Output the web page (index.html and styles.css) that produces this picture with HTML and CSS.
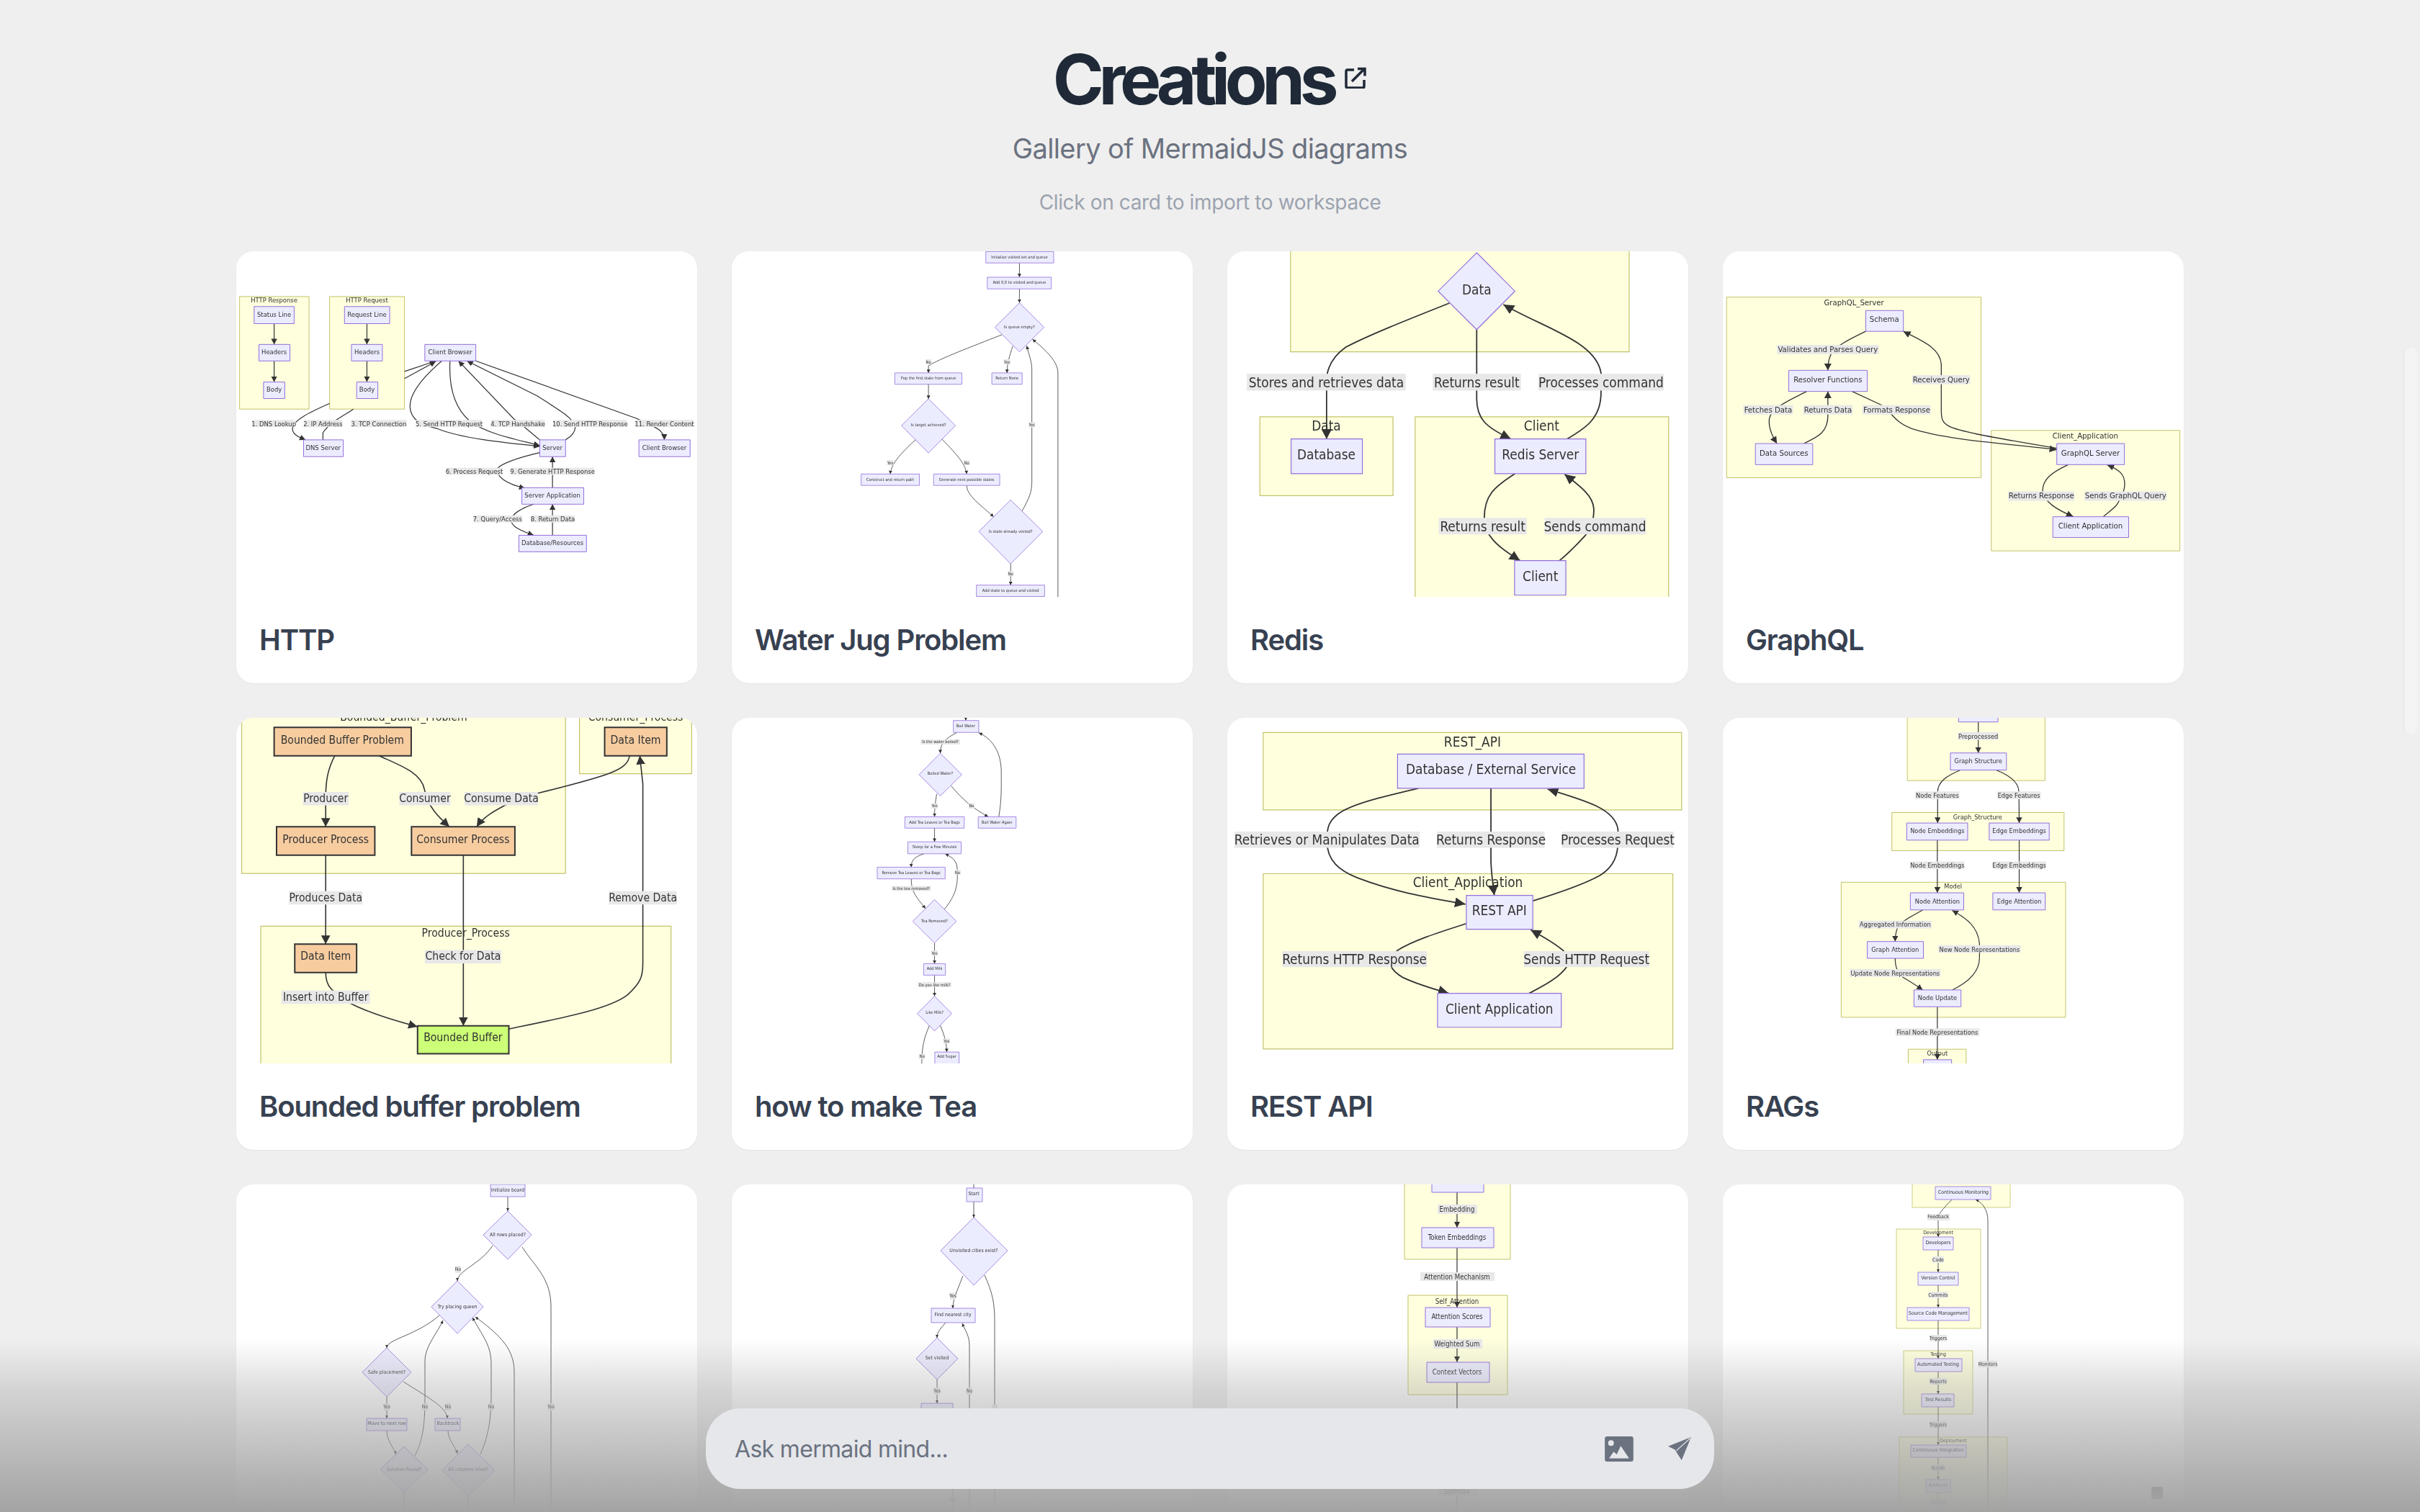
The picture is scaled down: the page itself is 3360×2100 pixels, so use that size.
FILE: index.html
```html
<!DOCTYPE html>
<html lang="en">
<head>
  <meta charset="UTF-8">
  <meta name="viewport" content="width=device-width, initial-scale=1.0">
  <title>Creations</title>
  <link rel="stylesheet" href="styles.css">
</head>
<body>
<svg class="defs" aria-hidden="true">
  <defs>
    <marker id="a35" viewBox="0 0 10 10" refX="10" refY="5" markerUnits="userSpaceOnUse" markerWidth="35" markerHeight="35" orient="auto"><path d="M0 0L10 5L0 10z" fill="#333"/></marker>
    <marker id="a30" viewBox="0 0 10 10" refX="10" refY="5" markerUnits="userSpaceOnUse" markerWidth="30" markerHeight="30" orient="auto"><path d="M0 0L10 5L0 10z" fill="#333"/></marker>
    <marker id="a24" viewBox="0 0 10 10" refX="10" refY="5" markerUnits="userSpaceOnUse" markerWidth="24" markerHeight="24" orient="auto"><path d="M0 0L10 5L0 10z" fill="#333"/></marker>
    <marker id="a20" viewBox="0 0 10 10" refX="10" refY="5" markerUnits="userSpaceOnUse" markerWidth="20" markerHeight="20" orient="auto"><path d="M0 0L10 5L0 10z" fill="#333"/></marker>
    <marker id="a12" viewBox="0 0 10 10" refX="10" refY="5" markerUnits="userSpaceOnUse" markerWidth="12" markerHeight="12" orient="auto"><path d="M0 0L10 5L0 10z" fill="#333"/></marker>
    <marker id="p4" viewBox="0 0 10 10" refX="10" refY="5" markerUnits="userSpaceOnUse" markerWidth="4.5" markerHeight="4.5" orient="auto"><path d="M0 0L10 5L0 10z" fill="#333"/></marker>
    <marker id="p8" viewBox="0 0 10 10" refX="10" refY="5" markerUnits="userSpaceOnUse" markerWidth="8" markerHeight="8" orient="auto"><path d="M0 0L10 5L0 10z" fill="#333"/></marker>
  </defs>
</svg>

<header class="page-head">
  <h1 class="page-title">Creations
    <svg class="ext-icon" viewBox="0 0 30 30"><path d="M13 4H4a2 2 0 0 0-2 2v21a2 2 0 0 0 2 2h21a2 2 0 0 0 2-2v-9M10 20L27 3M18 2.5h10v10"/></svg>
  </h1>
  <p class="page-sub">Gallery of MermaidJS diagrams</p>
  <p class="page-hint">Click on card to import to workspace</p>
</header>

<main class="gallery">

  <!-- row 1 -->
  <article class="card">
    <svg class="diagram d-http" viewBox="0 0 640 480">
      <g transform="translate(-8 -9.1) scale(.421 .3956)">
        <rect class="cl" x="30" y="182" width="229" height="395"/>
        <rect class="cl" x="327" y="182" width="247" height="395"/>
        <path class="ed" d="M327 557C270 585 215 610 205 640C200 665 225 675 248 685" marker-end="url(#a20)"/>
        <path class="ed" d="M405 577C375 600 330 620 305 660L305 685"/>
        <path class="ed" d="M574 445L677 408" marker-end="url(#a20)"/>
        <path class="ed" d="M574 470L677 410" marker-end="url(#a20)"/>
        <path class="ed" d="M697 408C640 460 590 520 592 570C595 610 620 630 680 645C760 680 900 695 1020 708" marker-end="url(#a20)"/>
        <path class="ed" d="M724 408C720 490 735 570 790 620C850 665 930 680 1020 705" marker-end="url(#a20)"/>
        <path class="ed" d="M1020 685C980 650 960 630 935 612L752 408" marker-end="url(#a20)"/>
        <path class="ed" d="M1105 685C1130 670 1137 655 1137 640C1130 610 1100 590 1010 530L780 408" marker-end="url(#a20)"/>
        <path class="ed" d="M809 408L1340 610C1400 640 1430 650 1431 685" marker-end="url(#a20)"/>
        <path class="ed" d="M1020 730C960 745 900 765 880 785C875 815 910 840 972 855" marker-end="url(#a20)"/>
        <path class="ed" d="M1062 853L1062 744" marker-end="url(#a20)"/>
        <path class="ed" d="M1000 911C960 925 930 945 925 965C925 990 960 1005 1000 1020" marker-end="url(#a20)"/>
        <path class="ed" d="M1062 1020L1062 911" marker-end="url(#a20)"/>
        <path class="ed" d="M144 277V350" marker-end="url(#a20)"/>
        <path class="ed" d="M144 408V482" marker-end="url(#a20)"/>
        <path class="ed" d="M450 277V350" marker-end="url(#a20)"/>
        <path class="ed" d="M450 408V482" marker-end="url(#a20)"/>
        <rect class="nd" x="78" y="217" width="132" height="60"/>
        <rect class="nd" x="94" y="350" width="102" height="58"/>
        <rect class="nd" x="109" y="482" width="70" height="58"/>
        <rect class="nd" x="376" y="217" width="149" height="60"/>
        <rect class="nd" x="399" y="350" width="102" height="58"/>
        <rect class="nd" x="416" y="482" width="70" height="58"/>
        <rect class="nd" x="641" y="350" width="168" height="58"/>
        <rect class="nd" x="241" y="685" width="131" height="59"/>
        <rect class="nd" x="1020" y="685" width="85" height="59"/>
        <rect class="nd" x="1347" y="685" width="169" height="59"/>
        <rect class="nd" x="961" y="853" width="204" height="58"/>
        <rect class="nd" x="951" y="1020" width="223" height="58"/>
        <rect class="lb" x="72" y="615" width="143" height="25"/>
        <rect class="lb" x="242" y="615" width="127" height="25"/>
        <rect class="lb" x="398" y="615" width="183" height="25"/>
        <rect class="lb" x="612" y="615" width="218" height="25"/>
        <rect class="lb" x="859" y="615" width="178" height="25"/>
        <rect class="lb" x="1065" y="615" width="242" height="25"/>
        <rect class="lb" x="1335" y="615" width="193" height="25"/>
        <rect class="lb" x="712" y="783" width="185" height="25"/>
        <rect class="lb" x="925" y="783" width="275" height="25"/>
        <rect class="lb" x="800" y="950" width="162" height="25"/>
        <rect class="lb" x="990" y="950" width="146" height="25"/>
      </g>
      <text x="52.6" y="67.6">HTTP Response</text>
      <text x="181.5" y="67.6">HTTP Request</text>
      <text x="52.6" y="87">Status Line</text>
      <text x="181.5" y="87">Request Line</text>
      <text x="52.6" y="139.3">Headers</text>
      <text x="181.5" y="139.3">Headers</text>
      <text x="52.6" y="191.9">Body</text>
      <text x="181.5" y="191.9">Body</text>
      <text x="297.2" y="139.3">Client Browser</text>
      <text x="52.2" y="239">1. DNS Lookup</text>
      <text x="120.4" y="239">2. IP Address</text>
      <text x="197.9" y="239">3. TCP Connection</text>
      <text x="295.5" y="239">5. Send HTTP Request</text>
      <text x="391.1" y="239">4. TCP Handshake</text>
      <text x="491.3" y="239">10. Send HTTP Response</text>
      <text x="594.5" y="239">11. Render Content</text>
      <text x="120.8" y="272.2">DNS Server</text>
      <text x="439.1" y="272.2">Server</text>
      <text x="594.5" y="272.2">Client Browser</text>
      <text x="330.5" y="305.4">6. Process Request</text>
      <text x="439.1" y="305.4">9. Generate HTTP Response</text>
      <text x="439.1" y="338.6">Server Application</text>
      <text x="362.9" y="371.5">7. Query/Access</text>
      <text x="439.5" y="371.5">8. Return Data</text>
      <text x="439.1" y="404.7">Database/Resources</text>
    </svg>
    <h3 class="card-title">HTTP</h3>
  </article>

  <article class="card">
    <svg class="diagram d-water" viewBox="0 0 640 480">
      <g transform="translate(-6 -9.1) scale(.421 .3956)">
        <path class="ed" d="M963 64V114" marker-end="url(#a12)"/>
        <path class="ed" d="M963 155V204" marker-end="url(#a12)"/>
        <path class="ed" d="M905 316C800 360 700 400 663 425L663 450" marker-end="url(#a12)"/>
        <path class="ed" d="M941 356C930 390 922 420 922 450" marker-end="url(#a12)"/>
        <path class="ed" d="M663 490V541" marker-end="url(#a12)"/>
        <path class="ed" d="M620 685C580 725 540 765 537 805" marker-end="url(#a12)"/>
        <path class="ed" d="M708 683C745 725 785 765 789 805" marker-end="url(#a12)"/>
        <path class="ed" d="M789 845C790 880 830 910 878 955" marker-end="url(#a12)"/>
        <path class="ed" d="M971 936C995 890 1004 870 1004 830L1004 440C1004 410 995 390 987 355" marker-end="url(#a12)"/>
        <path class="ed" d="M1090 1240L1090 450C1090 410 1050 370 1006 332" marker-end="url(#a12)"/>
        <path class="ed" d="M934 1120V1195" marker-end="url(#a12)"/>
        <rect class="nd" x="852" y="24" width="224" height="40"/>
        <rect class="nd" x="857" y="114" width="211" height="41"/>
        <polygon class="nd" points="963,204 1044,290 963,376 882,290"/>
        <rect class="nd" x="552" y="450" width="221" height="40"/>
        <rect class="nd" x="872" y="450" width="100" height="40"/>
        <polygon class="nd" points="663,541 752,635 663,731 574,635"/>
        <rect class="nd" x="441" y="805" width="192" height="40"/>
        <rect class="nd" x="680" y="805" width="218" height="40"/>
        <polygon class="nd" points="934,896 1040,1007 934,1120 829,1007"/>
        <rect class="nd" x="821" y="1195" width="225" height="40"/>
        <rect class="lb" x="653" y="402" width="20" height="18"/>
        <rect class="lb" x="911" y="402" width="22" height="18"/>
        <rect class="lb" x="526" y="756" width="22" height="18"/>
        <rect class="lb" x="779" y="756" width="20" height="18"/>
        <rect class="lb" x="993" y="623" width="22" height="18"/>
        <rect class="lb" x="924" y="1146" width="20" height="18"/>
      </g>
      <text x="399.4" y="7.9">Initialize visited set and queue</text>
      <text x="399.4" y="43.1">Add 0,0 to visited and queue</text>
      <text x="399.4" y="105.2">Is queue empty?</text>
      <text x="273.1" y="153.5">No</text>
      <text x="382.2" y="153.5">Yes</text>
      <text x="273.1" y="175.6">Pop the first state from queue</text>
      <text x="382.2" y="175.6">Return None</text>
      <text x="273.1" y="240.9">Is target achieved?</text>
      <text x="416.7" y="240.9">Yes</text>
      <text x="220.1" y="293.5">Yes</text>
      <text x="326.2" y="293.5">No</text>
      <text x="220.1" y="316.9">Construct and return path</text>
      <text x="326.2" y="316.9">Generate next possible states</text>
      <text x="387.2" y="388.5">Is state already visited?</text>
      <text x="387.2" y="447.8">No</text>
      <text x="387.2" y="470.8">Add state to queue and visited</text>
    </svg>
    <h3 class="card-title">Water Jug Problem</h3>
  </article>

  <article class="card">
    <svg class="diagram d-redis" viewBox="0 0 640 480">
      <g transform="translate(-4 -9.1) scale(.421 .3956)">
        <rect class="cl" x="218" y="-40" width="1117" height="416"/>
        <rect class="cl" x="117" y="604" width="439" height="277"/>
        <rect class="cl" x="629" y="604" width="836" height="720"/>
        <path class="ed" d="M742 205C600 265 470 320 400 360C360 390 340 430 337 470L337 682" marker-end="url(#a35)"/>
        <path class="ed" d="M832 298L832 540C832 610 860 640 945 682" marker-end="url(#a35)"/>
        <path class="ed" d="M1130 682C1190 645 1242 610 1242 520L1242 450C1225 340 1060 295 920 210" marker-end="url(#a35)"/>
        <path class="ed" d="M958 804C890 850 857 880 857 960C857 1020 900 1060 975 1109" marker-end="url(#a35)"/>
        <path class="ed" d="M1105 1109C1150 1070 1190 1020 1195 1015C1215 980 1220 950 1218 925C1215 880 1170 845 1122 806" marker-end="url(#a35)"/>
        <polygon class="nd" points="832,28 958,163 832,298 705,163"/>
        <rect class="nd" x="220" y="682" width="235" height="122"/>
        <rect class="nd" x="892" y="682" width="300" height="122"/>
        <rect class="nd" x="957" y="1109" width="169" height="121"/>
        <rect class="lb" x="74" y="453" width="524" height="59"/>
        <rect class="lb" x="687" y="453" width="291" height="59"/>
        <rect class="lb" x="1036" y="453" width="413" height="59"/>
        <rect class="lb" x="707" y="959" width="290" height="58"/>
        <rect class="lb" x="1056" y="959" width="334" height="58"/>
      </g>
      <text x="346.3" y="52.6">Data</text>
      <text x="137.5" y="182">Stores and retrieves data</text>
      <text x="346.3" y="182">Returns result</text>
      <text x="518.9" y="182">Processes command</text>
      <text x="137.5" y="241.7">Data</text>
      <text x="436.4" y="241.7">Client</text>
      <text x="137.5" y="281.7">Database</text>
      <text x="434.7" y="281.7">Redis Server</text>
      <text x="354.7" y="381.7">Returns result</text>
      <text x="510.5" y="381.7">Sends command</text>
      <text x="434.7" y="450.6">Client</text>
    </svg>
    <h3 class="card-title">Redis</h3>
  </article>

  <article class="card">
    <svg class="diagram d-graphql" viewBox="0 0 640 480">
      <g transform="translate(-12 -9.1) scale(.421 .3956)">
        <rect class="cl" x="41" y="184" width="839" height="634"/>
        <rect class="cl" x="914" y="652" width="622" height="423"/>
        <path class="ed" d="M500 304C450 330 400 355 385 385C378 400 375 420 375 441" marker-end="url(#a24)"/>
        <path class="ed" d="M305 515C260 540 190 570 182 610C178 640 190 670 207 698" marker-end="url(#a24)"/>
        <path class="ed" d="M296 698C340 675 375 660 375 600L375 515" marker-end="url(#a24)"/>
        <path class="ed" d="M455 515L550 562C590 590 590 620 650 645C780 690 1000 700 1130 720" marker-end="url(#a24)"/>
        <path class="ed" d="M1130 715C1000 690 840 665 780 640C750 625 749 610 749 580L749 420C745 360 680 335 624 304" marker-end="url(#a24)"/>
        <path class="ed" d="M1168 772C1110 800 1083 825 1083 865C1090 905 1130 930 1185 955" marker-end="url(#a24)"/>
        <path class="ed" d="M1283 955C1310 930 1335 915 1337 890C1360 860 1358 820 1340 800C1330 790 1315 780 1295 772" marker-end="url(#a24)"/>
        <rect class="nd" x="500" y="231" width="124" height="73"/>
        <rect class="nd" x="246" y="441" width="259" height="74"/>
        <rect class="nd" x="136" y="698" width="189" height="74"/>
        <rect class="nd" x="1130" y="698" width="223" height="74"/>
        <rect class="nd" x="1117" y="955" width="250" height="73"/>
        <rect class="lb" x="207" y="352" width="336" height="32"/>
        <rect class="lb" x="653" y="458" width="191" height="32"/>
        <rect class="lb" x="96" y="563" width="164" height="33"/>
        <rect class="lb" x="294" y="563" width="162" height="33"/>
        <rect class="lb" x="489" y="563" width="225" height="33"/>
        <rect class="lb" x="970" y="866" width="218" height="33"/>
        <rect class="lb" x="1222" y="866" width="270" height="33"/>
      </g>
      <text x="182.1" y="71.2">GraphQL_Server</text>
      <text x="224.2" y="94.9">Schema</text>
      <text x="145.9" y="136.5">Validates and Parses Query</text>
      <text x="145.9" y="178">Resolver Functions</text>
      <text x="303.3" y="178.4">Receives Query</text>
      <text x="62.9" y="220">Fetches Data</text>
      <text x="145.9" y="220">Returns Data</text>
      <text x="241.4" y="220">Formats Response</text>
      <text x="503.3" y="256.4">Client_Application</text>
      <text x="84.8" y="280.1">Data Sources</text>
      <text x="510.5" y="280.1">GraphQL Server</text>
      <text x="442.3" y="339.8">Returns Response</text>
      <text x="559.3" y="339.8">Sends GraphQL Query</text>
      <text x="510.5" y="381.8">Client Application</text>
    </svg>
    <h3 class="card-title">GraphQL</h3>
  </article>

  <!-- row 2 -->
  <article class="card">
    <svg class="diagram d-buffer" viewBox="0 0 640 480">
      <g transform="translate(-8 -7) scale(.421 .3956)">
        <rect class="cl" x="37" y="-40" width="1068" height="604"/>
        <rect class="cl" x="1151" y="-40" width="370" height="254"/>
        <rect class="cl" x="100" y="749" width="1353" height="560"/>
        <path class="ed" d="M344 151C320 200 314 240 314 300L314 400" marker-end="url(#a30)"/>
        <path class="ed" d="M490 151C560 185 630 210 640 270C650 330 690 370 722 400" marker-end="url(#a30)"/>
        <path class="ed" d="M1316 151C1310 200 1250 220 1015 282L905 325C870 345 835 365 812 400" marker-end="url(#a30)"/>
        <path class="ed" d="M314 500V812" marker-end="url(#a30)"/>
        <path class="ed" d="M768 500V1099" marker-end="url(#a30)"/>
        <path class="ed" d="M918 1110C1100 1070 1250 1040 1310 990C1350 950 1360 930 1360 880L1360 250L1350 151" marker-end="url(#a30)"/>
        <path class="ed" d="M314 912C314 960 330 975 395 1020C450 1050 520 1075 617 1102" marker-end="url(#a30)"/>
        <rect class="nd orange" x="144" y="51" width="452" height="100"/>
        <rect class="nd orange" x="1234" y="51" width="205" height="100"/>
        <rect class="nd orange" x="152" y="400" width="324" height="100"/>
        <rect class="nd orange" x="597" y="400" width="341" height="100"/>
        <rect class="nd orange" x="212" y="812" width="204" height="100"/>
        <rect class="nd green" x="617" y="1099" width="301" height="98"/>
        <rect class="lb" x="239" y="278" width="151" height="47"/>
        <rect class="lb" x="557" y="278" width="168" height="47"/>
        <rect class="lb" x="772" y="278" width="242" height="47"/>
        <rect class="lb" x="193" y="626" width="242" height="47"/>
        <rect class="lb" x="1248" y="626" width="224" height="47"/>
        <rect class="lb" x="641" y="833" width="252" height="47"/>
        <rect class="lb" x="168" y="975" width="292" height="47"/>
      </g>
      <text x="232.4" y="-1.5">Bounded_Buffer_Problem</text>
      <text x="554.5" y="-1.5">Consumer_Process</text>
      <text x="147.3" y="31">Bounded Buffer Problem</text>
      <text x="554.5" y="31">Data Item</text>
      <text x="124.2" y="111.7">Producer</text>
      <text x="261.9" y="111.7">Consumer</text>
      <text x="368" y="111.7">Consume Data</text>
      <text x="124.2" y="169">Producer Process</text>
      <text x="314.9" y="169">Consumer Process</text>
      <text x="124.2" y="249.7">Produces Data</text>
      <text x="564.6" y="249.7">Remove Data</text>
      <text x="318.7" y="299.2">Producer_Process</text>
      <text x="124.2" y="331.2">Data Item</text>
      <text x="314.9" y="331.2">Check for Data</text>
      <text x="124.2" y="387.8">Insert into Buffer</text>
      <text x="314.9" y="444">Bounded Buffer</text>
    </svg>
    <h3 class="card-title">Bounded buffer problem</h3>
  </article>

  <article class="card">
    <svg class="diagram d-water" viewBox="0 0 640 480">
      <g transform="translate(-6 -7) scale(.421 .3956)">
        <path class="ed" d="M786 8V27" marker-end="url(#a12)"/>
        <path class="ed" d="M757 69C720 90 702 105 702 142" marker-end="url(#a12)"/>
        <path class="ed" d="M690 285C685 320 683 340 683 365" marker-end="url(#a12)"/>
        <path class="ed" d="M738 257C780 310 810 335 860 365" marker-end="url(#a12)"/>
        <path class="ed" d="M895 365C905 300 903 260 903 200C900 120 860 85 829 70" marker-end="url(#a12)"/>
        <path class="ed" d="M683 405V453" marker-end="url(#a12)"/>
        <path class="ed" d="M648 495C620 505 606 515 606 542" marker-end="url(#a12)"/>
        <path class="ed" d="M606 583C606 630 625 650 653 687" marker-end="url(#a12)"/>
        <path class="ed" d="M715 690C755 640 760 600 758 560C760 520 745 510 718 495" marker-end="url(#a12)"/>
        <path class="ed" d="M683 808V881" marker-end="url(#a12)"/>
        <path class="ed" d="M683 921V995" marker-end="url(#a12)"/>
        <path class="ed" d="M702 1098C715 1130 723 1160 723 1191" marker-end="url(#a12)"/>
        <path class="ed" d="M666 1098C645 1150 641 1180 641 1240"/>
        <rect class="nd" x="745" y="27" width="84" height="42"/>
        <polygon class="nd" points="702,142 773,217 702,292 632,217"/>
        <rect class="nd" x="585" y="365" width="196" height="40"/>
        <rect class="nd" x="827" y="365" width="125" height="40"/>
        <rect class="nd" x="595" y="453" width="176" height="42"/>
        <rect class="nd" x="494" y="542" width="224" height="41"/>
        <polygon class="nd" points="683,656 755,732 683,808 611,732"/>
        <rect class="nd" x="647" y="881" width="72" height="40"/>
        <polygon class="nd" points="683,995 740,1056 683,1117 626,1056"/>
        <rect class="nd" x="684" y="1191" width="80" height="50"/>
        <rect class="lb" x="637" y="94" width="130" height="17"/>
        <rect class="lb" x="672" y="318" width="22" height="18"/>
        <rect class="lb" x="795" y="318" width="20" height="18"/>
        <rect class="lb" x="749" y="551" width="20" height="18"/>
        <rect class="lb" x="541" y="608" width="130" height="17"/>
        <rect class="lb" x="672" y="835" width="22" height="18"/>
        <rect class="lb" x="627" y="946" width="112" height="17"/>
        <rect class="lb" x="712" y="1143" width="22" height="18"/>
        <rect class="lb" x="632" y="1197" width="20" height="18"/>
      </g>
      <text x="324.9" y="11.2">Boil Water</text>
      <text x="289.5" y="33.4">Is the water boiled?</text>
      <text x="289.5" y="77.3">Boiled Water?</text>
      <text x="281.5" y="122.4">Yes</text>
      <text x="332.9" y="122.4">No</text>
      <text x="281.5" y="144.9">Add Tea Leaves or Tea Bags</text>
      <text x="368.3" y="144.9">Boil Water Again</text>
      <text x="281.5" y="178.9">Steep for a Few Minutes</text>
      <text x="249.1" y="214.5">Remove Tea Leaves or Tea Bags</text>
      <text x="313.5" y="214.5">No</text>
      <text x="249.1" y="236.7">Is the tea removed?</text>
      <text x="281.5" y="281.8">Tea Removed?</text>
      <text x="281.5" y="326.9">Yes</text>
      <text x="281.5" y="348.3">Add Milk</text>
      <text x="281.5" y="370.8">Do you like milk?</text>
      <text x="281.5" y="409.2">Like Milk?</text>
      <text x="298.4" y="448.7">Yes</text>
      <text x="264.3" y="470.1">No</text>
      <text x="298.4" y="470.1">Add Sugar</text>
    </svg>
    <h3 class="card-title">how to make Tea</h3>
  </article>

  <article class="card">
    <svg class="diagram d-rest" viewBox="0 0 640 480">
      <g transform="translate(-4 -7) scale(.421 .3956)">
        <rect class="cl" x="128" y="69" width="1380" height="272"/>
        <rect class="cl" x="128" y="565" width="1351" height="615"/>
        <path class="ed" d="M640 265C520 295 420 320 375 355C345 380 338 400 338 450C338 520 380 555 440 580C550 625 650 645 795 672" marker-end="url(#a35)"/>
        <path class="ed" d="M879 265L879 520C880 560 885 600 890 640" marker-end="url(#a35)"/>
        <path class="ed" d="M1018 660C1110 630 1190 600 1240 570C1285 540 1298 500 1298 450L1298 410C1290 340 1200 310 1066 268" marker-end="url(#a35)"/>
        <path class="ed" d="M798 740C710 770 620 800 570 835C530 880 550 905 590 930C640 955 690 970 740 985" marker-end="url(#a35)"/>
        <path class="ed" d="M1005 985C1060 955 1110 925 1130 890L1118 835C1090 810 1050 785 1010 762" marker-end="url(#a35)"/>
        <rect class="nd" x="571" y="145" width="615" height="120"/>
        <rect class="nd" x="798" y="641" width="219" height="119"/>
        <rect class="nd" x="703" y="985" width="408" height="119"/>
        <rect class="lb" x="33" y="417" width="611" height="57"/>
        <rect class="lb" x="701" y="417" width="355" height="57"/>
        <rect class="lb" x="1113" y="417" width="369" height="57"/>
        <rect class="lb" x="191" y="837" width="477" height="56"/>
        <rect class="lb" x="988" y="837" width="413" height="56"/>
      </g>
      <text x="340.4" y="32.6">REST_API</text>
      <text x="366.1" y="70.9">Database / External Service</text>
      <text x="138.3" y="169.4">Retrieves or Manipulates Data</text>
      <text x="366.1" y="169.4">Returns Response</text>
      <text x="542" y="169.4">Processes Request</text>
      <text x="334" y="228.4">Client_Application</text>
      <text x="377.8" y="266.8">REST API</text>
      <text x="176.6" y="335.2">Returns HTTP Response</text>
      <text x="498.7" y="335.2">Sends HTTP Request</text>
      <text x="377.8" y="403.6">Client Application</text>
    </svg>
    <h3 class="card-title">REST API</h3>
  </article>

  <article class="card">
    <svg class="diagram d-rags" viewBox="0 0 640 480">
      <g transform="translate(-12 -7) scale(.421 .3956)">
        <rect class="cl" x="637" y="-40" width="454" height="278"/>
        <rect class="cl" x="586" y="350" width="568" height="134"/>
        <rect class="cl" x="419" y="595" width="740" height="474"/>
        <rect class="cl" x="640" y="1181" width="191" height="130"/>
        <path class="ed" d="M871 32V141" marker-end="url(#a20)"/>
        <path class="ed" d="M812 201C770 220 737 240 737 278L737 387" marker-end="url(#a20)"/>
        <path class="ed" d="M930 201C975 220 1005 245 1005 278L1006 387" marker-end="url(#a20)"/>
        <path class="ed" d="M736 447V632" marker-end="url(#a20)"/>
        <path class="ed" d="M1006 447V632" marker-end="url(#a20)"/>
        <path class="ed" d="M688 692C650 715 610 735 603 760C598 775 597 790 597 803" marker-end="url(#a20)"/>
        <path class="ed" d="M597 862C597 900 610 920 625 930C650 945 670 960 688 973" marker-end="url(#a20)"/>
        <path class="ed" d="M785 973C840 945 875 910 875 860L875 810C870 750 830 720 785 694" marker-end="url(#a20)"/>
        <path class="ed" d="M736 1032V1218" marker-end="url(#a20)"/>
        <rect class="nd" x="806" y="-30" width="130" height="62"/>
        <rect class="nd" x="779" y="141" width="185" height="60"/>
        <rect class="nd" x="635" y="387" width="201" height="60"/>
        <rect class="nd" x="907" y="387" width="198" height="60"/>
        <rect class="nd" x="647" y="632" width="176" height="60"/>
        <rect class="nd" x="919" y="632" width="173" height="60"/>
        <rect class="nd" x="505" y="803" width="185" height="59"/>
        <rect class="nd" x="659" y="973" width="155" height="59"/>
        <rect class="nd" x="690" y="1218" width="93" height="72"/>
        <rect class="lb" x="804" y="68" width="133" height="27"/>
        <rect class="lb" x="663" y="276" width="146" height="27"/>
        <rect class="lb" x="934" y="276" width="143" height="27"/>
        <rect class="lb" x="646" y="522" width="179" height="27"/>
        <rect class="lb" x="918" y="522" width="176" height="27"/>
        <rect class="lb" x="477" y="730" width="240" height="27"/>
        <rect class="lb" x="739" y="816" width="272" height="27"/>
        <rect class="lb" x="447" y="900" width="300" height="27"/>
        <rect class="lb" x="598" y="1108" width="277" height="27"/>
      </g>
      <text x="354.7" y="25">Preprocessed</text>
      <text x="354.7" y="59.5">Graph Structure</text>
      <text x="297.9" y="107.3">Node Features</text>
      <text x="411.1" y="107.3">Edge Features</text>
      <text x="353.8" y="137.4">Graph_Structure</text>
      <text x="297.9" y="156.8">Node Embeddings</text>
      <text x="411.5" y="156.8">Edge Embeddings</text>
      <text x="297.9" y="204.6">Node Embeddings</text>
      <text x="411.5" y="204.6">Edge Embeddings</text>
      <text x="319.7" y="233.5">Model</text>
      <text x="297.9" y="254.1">Node Attention</text>
      <text x="411.5" y="254.1">Edge Attention</text>
      <text x="239.3" y="286.9">Aggregated Information</text>
      <text x="239.3" y="321.4">Graph Attention</text>
      <text x="356.4" y="321">New Node Representations</text>
      <text x="239.3" y="354.6">Update Node Representations</text>
      <text x="297.9" y="388.6">Node Update</text>
      <text x="297.9" y="436.9">Final Node Representations</text>
      <text x="297.9" y="465.7">Output</text>
    </svg>
    <h3 class="card-title">RAGs</h3>
  </article>

  <!-- row 3, mostly under the fade -->
  <article class="card">
    <svg class="diagram d-small" viewBox="0 0 640 480">
      <path class="ed" d="M377 17V37" marker-end="url(#p4)"/>
      <path class="ed" d="M356 85C340 110 307 120 307 134" marker-end="url(#p4)"/>
      <path class="ed" d="M397 87C415 115 437 130 437 170L437 480"/>
      <path class="ed" d="M282 182C250 210 209 215 209 227" marker-end="url(#p4)"/>
      <path class="ed" d="M209 295V325" marker-end="url(#p4)"/>
      <path class="ed" d="M232 274C265 295 293 310 293 325" marker-end="url(#p4)"/>
      <path class="ed" d="M248 377C262 350 262 320 262 290L262 245C262 225 280 205 287 189" marker-end="url(#p4)"/>
      <path class="ed" d="M339 375C352 345 354 320 354 290L354 250C354 225 345 215 328 185" marker-end="url(#p4)"/>
      <path class="ed" d="M386 480L386 260C386 225 360 205 332 184" marker-end="url(#p4)"/>
      <path class="ed" d="M209 342C209 355 218 365 222 375" marker-end="url(#p4)"/>
      <path class="ed" d="M294 342C294 355 305 365 307 374" marker-end="url(#p4)"/>
      <path class="ed" d="M233 428V480"/>
      <path class="ed" d="M322 433V480"/>
      <rect class="nd" x="353" y="0" width="48" height="17"/>
      <polygon class="nd" points="377,37 410,70 377,104 343,70"/>
      <polygon class="nd" points="307,134 343,170 307,207 271,170"/>
      <polygon class="nd" points="209,227 243,261 209,295 175,261"/>
      <rect class="nd" x="181" y="325" width="56" height="17"/>
      <rect class="nd" x="276" y="325" width="35" height="17"/>
      <polygon class="nd" points="233,364 266,396 233,428 200,396"/>
      <polygon class="nd" points="322,361 359,397 322,433 286,397"/>
      <rect class="lb" x="304" y="113" width="8" height="10"/>
      <rect class="lb" x="205" y="304" width="8" height="10"/>
      <rect class="lb" x="258" y="304" width="8" height="10"/>
      <rect class="lb" x="290" y="304" width="8" height="10"/>
      <rect class="lb" x="350" y="304" width="8" height="10"/>
      <rect class="lb" x="433" y="304" width="8" height="10"/>
      <text x="377" y="7.7">Initialize board</text>
      <text x="377" y="70">All rows placed?</text>
      <text x="308" y="118">No</text>
      <text x="307" y="170">Try placing queen</text>
      <text x="209" y="261">Safe placement?</text>
      <text x="209" y="309">Yes</text>
      <text x="262" y="309">No</text>
      <text x="294" y="309">No</text>
      <text x="354" y="309">No</text>
      <text x="437" y="309">Yes</text>
      <text x="209" y="332">Move to next row</text>
      <text x="294" y="332">Backtrack</text>
      <text x="233" y="396">Solution found?</text>
      <text x="322" y="396">All columns tried?</text>
    </svg>
    <h3 class="card-title">N Queens</h3>
  </article>

  <article class="card">
    <svg class="diagram d-small" viewBox="0 0 640 480">
      <path class="ed" d="M336 0V5"/>
      <path class="ed" d="M336 24V46" marker-end="url(#p4)"/>
      <path class="ed" d="M321 127C312 150 307 160 307 172" marker-end="url(#p4)"/>
      <path class="ed" d="M351 126C362 150 365 165 365 190L365 480"/>
      <path class="ed" d="M297 192C290 200 285 205 285 213" marker-end="url(#p4)"/>
      <path class="ed" d="M330 480L330 225C330 210 325 205 320 193" marker-end="url(#p4)"/>
      <path class="ed" d="M285 271V304" marker-end="url(#p4)"/>
      <path class="ed" d="M307 423V480"/>
      <rect class="nd" x="326" y="5" width="22" height="19"/>
      <polygon class="nd" points="336,46 383,92 336,140 290,92"/>
      <rect class="nd" x="277" y="172" width="61" height="20"/>
      <polygon class="nd" points="285,213 314,242 285,271 256,242"/>
      <rect class="nd" x="263" y="304" width="44" height="19"/>
      <rect class="lb" x="303" y="150" width="8" height="10"/>
      <rect class="lb" x="281" y="282" width="8" height="10"/>
      <rect class="lb" x="326" y="282" width="8" height="10"/>
      <rect class="lb" x="361" y="306" width="8" height="10"/>
      <rect class="lb" x="303" y="433" width="8" height="10"/>
      <text x="336" y="13">Start</text>
      <text x="336" y="92">Unvisited cities exist?</text>
      <text x="307" y="155">Yes</text>
      <text x="307" y="181">Find nearest city</text>
      <text x="285" y="241">Set visited</text>
      <text x="285" y="287">Yes</text>
      <text x="330" y="287">No</text>
      <text x="307" y="438">No</text>
    </svg>
    <h3 class="card-title">Traveling Salesman</h3>
  </article>

  <article class="card">
    <svg class="diagram d-attn" viewBox="0 0 640 480">
      <rect class="cl" x="246" y="-20" width="147" height="124"/>
      <rect class="cl" x="251" y="154" width="138" height="138"/>
      <path class="ed" d="M319 11V60" marker-end="url(#p8)"/>
      <path class="ed" d="M319 88V171" marker-end="url(#p8)"/>
      <path class="ed" d="M319 198V247" marker-end="url(#p8)"/>
      <path class="ed" d="M319 275V480"/>
      <rect class="nd" x="284" y="-20" width="72" height="31"/>
      <rect class="nd" x="270" y="60" width="100" height="28"/>
      <rect class="nd" x="275" y="171" width="90" height="27"/>
      <rect class="nd" x="277" y="247" width="87" height="28"/>
      <rect class="lb" x="292" y="28" width="55" height="13"/>
      <rect class="lb" x="268" y="122" width="103" height="12"/>
      <rect class="lb" x="286" y="215" width="68" height="13"/>
      <rect class="lb" x="292" y="420" width="55" height="13"/>
      <text x="319" y="34">Embedding</text>
      <text x="319" y="73">Token Embeddings</text>
      <text x="319" y="128">Attention Mechanism</text>
      <text x="319" y="162">Self_Attention</text>
      <text x="319" y="183">Attention Scores</text>
      <text x="319" y="221">Weighted Sum</text>
      <text x="319" y="260">Context Vectors</text>
      <text x="319" y="426">Softmax</text>
    </svg>
    <h3 class="card-title">Transformer</h3>
  </article>

  <article class="card">
    <svg class="diagram d-small" viewBox="0 0 640 480">
      <rect class="cl" x="263" y="-20" width="136" height="52"/>
      <rect class="cl" x="241" y="62" width="117" height="138"/>
      <rect class="cl" x="251" y="231" width="96" height="88"/>
      <rect class="cl" x="245" y="351" width="150" height="140"/>
      <path class="ed" d="M318 21C305 35 299 40 299 50L299 73" marker-end="url(#p4)"/>
      <path class="ed" d="M299 91V122" marker-end="url(#p4)"/>
      <path class="ed" d="M299 140V171" marker-end="url(#p4)"/>
      <path class="ed" d="M299 189V242" marker-end="url(#p4)"/>
      <path class="ed" d="M299 260V291" marker-end="url(#p4)"/>
      <path class="ed" d="M299 309V362" marker-end="url(#p4)"/>
      <path class="ed" d="M299 379V410" marker-end="url(#p4)"/>
      <path class="ed" d="M299 428V455"/>
      <path class="ed" d="M368 470L368 50C368 35 360 25 351 21" marker-end="url(#p4)"/>
      <rect class="nd" x="295" y="3" width="77" height="18"/>
      <rect class="nd" x="278" y="73" width="42" height="18"/>
      <rect class="nd" x="271" y="122" width="56" height="18"/>
      <rect class="nd" x="256" y="171" width="86" height="18"/>
      <rect class="nd" x="267" y="242" width="65" height="18"/>
      <rect class="nd" x="276" y="291" width="45" height="18"/>
      <rect class="nd" x="261" y="362" width="77" height="17"/>
      <rect class="nd" x="282" y="410" width="34" height="18"/>
      <rect class="lb" x="284" y="41" width="31" height="9"/>
      <rect class="lb" x="291" y="100" width="16" height="9"/>
      <rect class="lb" x="286" y="149" width="26" height="9"/>
      <rect class="lb" x="287" y="209" width="24" height="9"/>
      <rect class="lb" x="355" y="245" width="26" height="9"/>
      <rect class="lb" x="287" y="269" width="24" height="9"/>
      <rect class="lb" x="287" y="329" width="24" height="9"/>
      <rect class="lb" x="291" y="389" width="16" height="9"/>
      <rect class="lb" x="288" y="437" width="22" height="9"/>
      <text x="334" y="11">Continuous Monitoring</text>
      <text x="299" y="45">Feedback</text>
      <text x="299" y="67">Development</text>
      <text x="299" y="81">Developers</text>
      <text x="299" y="105">Code</text>
      <text x="299" y="130">Version Control</text>
      <text x="299" y="154">Commits</text>
      <text x="299" y="179">Source Code Management</text>
      <text x="299" y="214">Triggers</text>
      <text x="299" y="236">Testing</text>
      <text x="299" y="250">Automated Testing</text>
      <text x="368" y="250">Monitors</text>
      <text x="299" y="274">Reports</text>
      <text x="299" y="299">Test Results</text>
      <text x="299" y="334">Triggers</text>
      <text x="320" y="356">Deployment</text>
      <text x="299" y="369">Continuous Integration</text>
      <text x="299" y="394">Builds</text>
      <text x="299" y="418">Artifacts</text>
      <text x="299" y="442">Deploy</text>
      <rect class="badge" x="595" y="420" width="16" height="17" rx="3"/>
    </svg>
    <h3 class="card-title">CI/CD</h3>
  </article>
</main>

<div class="scroll-thumb"></div>

<div class="fade">
  <form class="ask-bar">
    <input class="ask-input" type="text" placeholder="Ask mermaid mind...">
    <svg class="ask-icon photo" viewBox="0 0 120 106">
      <rect width="120" height="106" rx="10"/>
      <circle class="cut" cx="26" cy="28" r="12"/>
      <path class="cut" d="M18 92L37 64L50 76L67 40L102 92Z"/>
    </svg>
    <svg class="ask-icon plane" viewBox="0 0 97 97">
      <path d="M97 0L0 39L28 52L57 97Z"/>
      <path class="fold" d="M94 4L34 58"/>
    </svg>
  </form>
</div>
</body>
</html>
```

FILE: styles.css
```css
body {
  margin: 0;
  height: 2100px;
  overflow: hidden;
  position: relative;
  background: #efefef;
  font-family: Inter, "Liberation Sans", sans-serif;
}
.defs {
  display: block;
  width: 0;
  height: 0;
}

/* header */
.page-head {
  padding-top: 62px;
  text-align: center;
}
.page-title {
  display: flex;
  justify-content: center;
  align-items: center;
  gap: 16px;
  margin: 0;
  padding: 0 5px 0 4px;
  font-size: 96px;
  line-height: 96px;
  font-weight: 700;
  letter-spacing: -0.076em;
  color: #1f2937;
}
.ext-icon {
  width: 30px;
  height: 30px;
  margin-top: -4px;
  fill: none;
  stroke: #1f2937;
  stroke-width: 3.5;
}
.page-sub {
  margin: 20px 0 0;
  font-size: 38px;
  line-height: 56px;
  letter-spacing: -0.6px;
  color: #6b7280;
}
.page-hint {
  margin: 27px 0 0;
  font-size: 28px;
  line-height: 40px;
  letter-spacing: -0.36px;
  color: #9ca3af;
}

/* cards */
.gallery {
  display: grid;
  grid-template-columns: repeat(4, 640px);
  gap: 48px;
  justify-content: center;
  margin-top: 48px;
}
.card {
  background: #fff;
  border-radius: 24px;
  overflow: hidden;
  box-shadow: 0 1px 2px rgba(0, 0, 0, 0.05);
}
.card-title {
  margin: 0;
  padding: 32px;
  font-size: 40px;
  line-height: 56px;
  font-weight: 600;
  letter-spacing: -0.028em;
  color: #374151;
}

/* mermaid look */
.diagram {
  display: block;
  width: 640px;
  height: 480px;
  font-family: "DejaVu Sans", sans-serif;
  font-stretch: condensed;
  filter: blur(0.4px);
}
.diagram text {
  fill: #333;
  text-anchor: middle;
  dominant-baseline: central;
}
.cl {
  fill: #ffffde;
  stroke: #aaaa33;
  stroke-width: var(--nd);
  stroke-opacity: 0.7;
  vector-effect: non-scaling-stroke;
}
.nd {
  fill: #ececff;
  stroke: #9370db;
  stroke-width: var(--nd);
  vector-effect: non-scaling-stroke;
}
.nd.orange {
  fill: #f7cda0;
  stroke: #333;
  stroke-width: 2px;
}
.nd.green {
  fill: #ccff77;
  stroke: #333;
  stroke-width: 2px;
}
.ed {
  fill: none;
  stroke: #333;
  stroke-width: var(--ed);
  vector-effect: non-scaling-stroke;
}
.lb {
  fill: #e8e8e8;
}
.badge {
  fill: #777;
}
.d-http { font-size: 9.4px; --ed: 1.2px; --nd: 1px; }
.d-water { font-size: 5.7px; --ed: 0.8px; --nd: 0.8px; }
.d-redis { font-size: 18.9px; --ed: 1.8px; --nd: 1.2px; }
.d-graphql { font-size: 11.3px; --ed: 1.3px; --nd: 1px; }
.d-buffer { font-size: 15.6px; --ed: 1.6px; --nd: 1.2px; }
.d-rest { font-size: 18.9px; --ed: 1.8px; --nd: 1.2px; }
.d-rags { font-size: 9.2px; --ed: 1.2px; --nd: 1px; }
.d-small { font-size: 6.9px; --ed: 0.8px; --nd: 0.8px; }
.d-attn { font-size: 9.6px; --ed: 1.2px; --nd: 1px; }

/* bottom fade and prompt */
.fade {
  position: absolute;
  left: 0;
  right: 0;
  bottom: 0;
  height: 240px;
  display: flex;
  justify-content: center;
  align-items: flex-end;
  padding-bottom: 32px;
  box-sizing: border-box;
  background: linear-gradient(to bottom, rgba(163, 163, 163, 0) 0, rgba(163, 163, 163, 0.36) 29%, rgba(163, 163, 163, 1) 100%);
}
.ask-bar {
  display: flex;
  align-items: center;
  width: 1400px;
  height: 112px;
  padding: 0 32px 0 40px;
  box-sizing: border-box;
  border-radius: 48px;
  background: #e5e7eb;
}
.ask-input {
  flex: 1;
  min-width: 0;
  border: none;
  outline: none;
  padding: 0;
  background: transparent;
  font-family: inherit;
  font-size: 32px;
  letter-spacing: -0.68px;
}
.ask-input::placeholder {
  color: #6b7280;
  opacity: 1;
}
.ask-icon {
  fill: #6b7280;
}
.ask-icon .cut {
  fill: #e5e7eb;
}
.photo {
  width: 40px;
  height: 35px;
  margin-right: 48px;
}
.plane {
  width: 32px;
  height: 32px;
}
.plane .fold {
  fill: none;
  stroke: #e5e7eb;
  stroke-width: 4;
}

.scroll-thumb {
  position: absolute;
  right: 4px;
  top: 482px;
  width: 18px;
  height: 538px;
  border-radius: 9px;
  background: #f4f4f4;
  box-shadow: -1px 0 0 rgba(0, 0, 0, 0.05);
}
```
